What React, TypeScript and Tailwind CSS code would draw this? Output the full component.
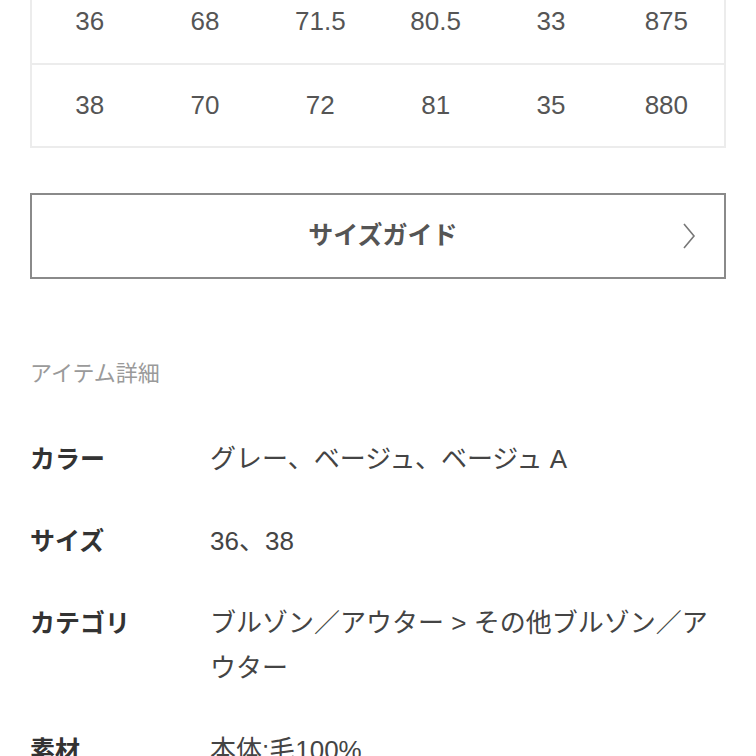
import React from "react";

const rows = [
  ["36", "68", "71.5", "80.5", "33", "875"],
  ["38", "70", "72", "81", "35", "880"],
];

const details: { label: string; value: string }[] = [
  { label: "カラー", value: "グレー、ベージュ、ベージュ A" },
  { label: "サイズ", value: "36、38" },
  { label: "カテゴリ", value: "ブルゾン／アウター > その他ブルゾン／アウター" },
  { label: "素材", value: "本体:毛100%" },
];

export default function App() {
  return (
    <div
      className="w-[756px] h-[756px] overflow-hidden bg-white px-[30px]"
      style={{ fontFamily: '"Liberation Sans", "Noto Sans CJK JP", sans-serif' }}
    >
      <div className="mt-[-22px] border-2 border-[#ececec]">
        {rows.map((r, i) => (
          <div
            key={i}
            className={`grid grid-cols-6 h-[83px] items-center text-center text-[26px] text-[#555] ${
              i > 0 ? "border-t-2 border-[#ececec]" : ""
            }`}
          >
            {r.map((c, j) => (
              <div key={j}>{c}</div>
            ))}
          </div>
        ))}
      </div>

      <div className="mt-[45px] h-[86px] border-2 border-[#8a8a8a] flex items-center relative">
        <div className="flex-1 text-center text-[25px] font-bold text-[#555] pl-[10px]">サイズガイド</div>
        <svg
          className="absolute right-[28px] top-1/2 -translate-y-1/2"
          width="14"
          height="26"
          viewBox="0 0 14 26"
          fill="none"
        >
          <path d="M2 1 L12 13 L2 25" stroke="#777" strokeWidth="1.6" />
        </svg>
      </div>

      <div className="mt-[80px] text-[22px] leading-[30px] text-[#9a9a9a]">アイテム詳細</div>

      <div className="mt-[48px] flex flex-col gap-[37px]">
        {details.map((d) => (
          <div key={d.label} className="flex leading-[45px]">
            <div className="w-[180px] shrink-0 text-[25px] font-bold text-[#333]">{d.label}</div>
            <div className="w-[505px] text-[26px] text-[#444]">{d.value}</div>
          </div>
        ))}
      </div>
    </div>
  );
}
